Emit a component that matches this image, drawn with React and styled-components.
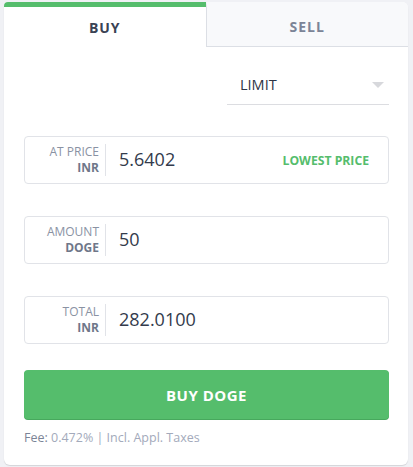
import React from 'react';
import styled, { createGlobalStyle } from 'styled-components';

const GlobalStyle = createGlobalStyle`
  html, body { margin: 0; padding: 0; background: #f0f1f5; }
  body { font-family: "Open Sans", "Noto Sans", sans-serif; }
  * { box-sizing: border-box; }
`;

const Page = styled.div`
  padding: 2px 5px 2px 4px;
`;

const Card = styled.div`
  background: #fff;
  border-radius: 4px 6px 6px 6px;
  box-shadow: 0 1px 1px rgba(0, 0, 0, 0.12);
  height: 463px;
  overflow: hidden;
  display: flex;
  flex-direction: column;
`;

const Tabs = styled.div`
  display: flex;
  height: 45px;
`;

const Tab = styled.div`
  flex: 1;
  display: flex;
  align-items: center;
  justify-content: center;
  font-size: 14px;
  font-weight: 700;
  letter-spacing: 1px;
  color: ${p => (p.active ? '#3a4254' : '#7b8497')};
  background: ${p => (p.active ? '#fff' : '#f8f9fb')};
  border-top: 5px solid ${p => (p.active ? '#55bd6c' : '#f8f9fb')};
  border-left: ${p => (p.active ? 'none' : '1px solid #dcdfe5')};
  border-bottom: ${p => (p.active ? 'none' : '1px solid #dcdfe5')};
`;

const Body = styled.div`
  padding: 0 19px 0 20px;
  display: flex;
  flex-direction: column;
`;

const SelectRow = styled.div`
  display: flex;
  justify-content: flex-end;
  padding-top: 23px;
  margin-bottom: 31px;
`;

const Select = styled.div`
  width: 162px;
  height: 35px;
  border-bottom: 1px solid #dcdde1;
  display: flex;
  align-items: center;
  justify-content: space-between;
  padding: 0 5px 5px 13px;
  font-size: 14.5px;
  color: #2c3446;
`;

const Caret = styled.span`
  width: 0;
  height: 0;
  border-left: 6px solid transparent;
  border-right: 6px solid transparent;
  border-top: 6px solid #d7d8dc;
`;

const Field = styled.div`
  height: 48px;
  border: 1px solid #e1e3e8;
  border-radius: 4px;
  display: flex;
  align-items: center;
  margin-bottom: 32px;
`;

const Label = styled.div`
  width: 81px;
  text-align: right;
  padding-right: 6px;
  border-right: 1px solid #e1e3e8;
  font-size: 12px;
  line-height: 16px;
  color: #8a92a3;
  text-transform: uppercase;
`;

const Unit = styled.div`
  font-weight: 700;
  color: #6f7789;
`;

const Value = styled.div`
  flex: 1;
  padding-left: 13px;
  font-size: 18px;
  color: #333b4c;
  padding-bottom: 2px;
`;

const Hint = styled.div`
  font-size: 12.2px;
  font-weight: 700;
  color: #55bd6c;
  padding-right: 19px;
`;

const BuyButton = styled.button`
  height: 49px;
  margin-top: -6px;
  border: none;
  border-radius: 4px;
  background: #55bd6c;
  box-shadow: 0 1px 0 #47a85d;
  color: #fff;
  font-family: inherit;
  font-size: 15px;
  font-weight: 700;
  letter-spacing: 0.5px;
`;

const Fee = styled.div`
  margin-top: 10px;
  font-size: 12.5px;
  color: #a3aabb;
  b {
    font-weight: 400;
    color: #7b8497;
  }
`;

export default function App() {
  return (
    <Page>
      <GlobalStyle />
      <Card>
        <Tabs>
          <Tab active>BUY</Tab>
          <Tab>SELL</Tab>
        </Tabs>
        <Body>
          <SelectRow>
            <Select>
              LIMIT
              <Caret />
            </Select>
          </SelectRow>
          <Field>
            <Label>
              At Price
              <Unit>INR</Unit>
            </Label>
            <Value>5.6402</Value>
            <Hint>LOWEST PRICE</Hint>
          </Field>
          <Field>
            <Label>
              Amount
              <Unit>DOGE</Unit>
            </Label>
            <Value>50</Value>
          </Field>
          <Field>
            <Label>
              Total
              <Unit>INR</Unit>
            </Label>
            <Value>282.0100</Value>
          </Field>
          <BuyButton>BUY DOGE</BuyButton>
          <Fee>
            <b>Fee:</b> 0.472% | Incl. Appl. Taxes
          </Fee>
        </Body>
      </Card>
    </Page>
  );
}
